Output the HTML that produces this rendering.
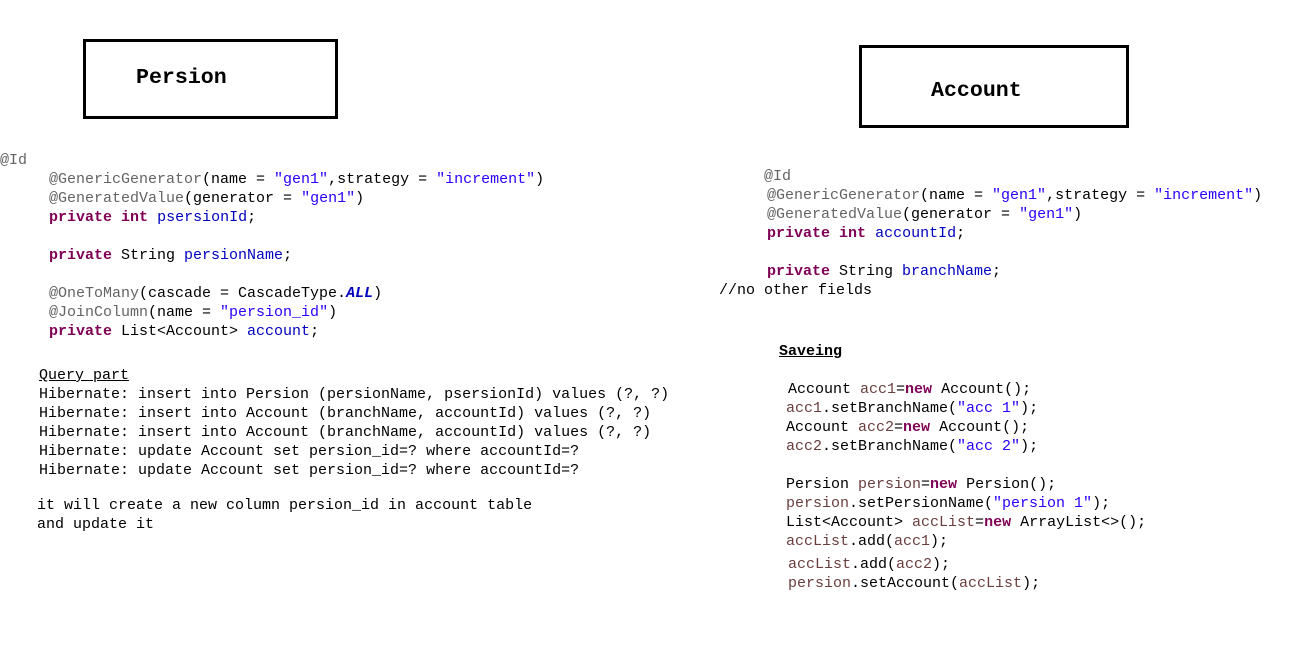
<!DOCTYPE html>
<html><head><meta charset="utf-8"><style>
body{margin:0;width:1297px;height:669px;background:#fff;position:relative;overflow:hidden;font-family:"Liberation Mono",monospace;font-size:15px;color:#000}
.l{position:absolute;white-space:pre;line-height:19px;height:19px}
.a{color:#646464}.s{color:#2a00ff}.k{color:#7f0055;font-weight:bold}.f{color:#0000c0}.v{color:#6a3e3e}
.box{position:absolute;border:3px solid #000;box-sizing:border-box}
.h{position:absolute;font-family:"Liberation Mono",monospace;font-weight:bold;font-size:21.6px;line-height:24px}
</style></head><body>
<div class="box" style="left:83px;top:39px;width:255px;height:80px"></div>
<div class="h" style="left:136px;top:66px">Persion</div>
<div class="box" style="left:859px;top:45px;width:270px;height:83px"></div>
<div class="h" style="left:931px;top:79px">Account</div>

<div class="l a" style="left:0;top:151px">@Id</div>
<div class="l" style="left:49px;top:170px"><span class="a">@GenericGenerator</span>(name = <span class="s">"gen1"</span>,strategy = <span class="s">"increment"</span>)</div>
<div class="l" style="left:49px;top:189px"><span class="a">@GeneratedValue</span>(generator = <span class="s">"gen1"</span>)</div>
<div class="l" style="left:49px;top:208px"><span class="k">private</span> <span class="k">int</span> <span class="f">psersionId</span>;</div>
<div class="l" style="left:49px;top:246px"><span class="k">private</span> String <span class="f">persionName</span>;</div>
<div class="l" style="left:49px;top:284px"><span class="a">@OneToMany</span>(cascade = CascadeType.<b style="color:#0000c0;font-style:italic">ALL</b>)</div>
<div class="l" style="left:49px;top:303px"><span class="a">@JoinColumn</span>(name = <span class="s">"persion_id"</span>)</div>
<div class="l" style="left:49px;top:322px"><span class="k">private</span> List&lt;Account&gt; <span class="f">account</span>;</div>

<div class="l" style="left:39px;top:366px;text-decoration:underline">Query part</div>
<div class="l" style="left:39px;top:385px">Hibernate: insert into Persion (persionName, psersionId) values (?, ?)</div>
<div class="l" style="left:39px;top:404px">Hibernate: insert into Account (branchName, accountId) values (?, ?)</div>
<div class="l" style="left:39px;top:423px">Hibernate: insert into Account (branchName, accountId) values (?, ?)</div>
<div class="l" style="left:39px;top:442px">Hibernate: update Account set persion_id=? where accountId=?</div>
<div class="l" style="left:39px;top:461px">Hibernate: update Account set persion_id=? where accountId=?</div>
<div class="l" style="left:37px;top:496px">it will create a new column persion_id in account table</div>
<div class="l" style="left:37px;top:515px">and update it</div>

<div class="l a" style="left:764px;top:167px">@Id</div>
<div class="l" style="left:767px;top:186px"><span class="a">@GenericGenerator</span>(name = <span class="s">"gen1"</span>,strategy = <span class="s">"increment"</span>)</div>
<div class="l" style="left:767px;top:205px"><span class="a">@GeneratedValue</span>(generator = <span class="s">"gen1"</span>)</div>
<div class="l" style="left:767px;top:224px"><span class="k">private</span> <span class="k">int</span> <span class="f">accountId</span>;</div>
<div class="l" style="left:767px;top:262px"><span class="k">private</span> String <span class="f">branchName</span>;</div>
<div class="l" style="left:719px;top:281px">//no other fields</div>

<div class="l" style="left:779px;top:342px;font-weight:bold;text-decoration:underline">Saveing</div>
<div class="l" style="left:788px;top:380px">Account <span class="v">acc1</span>=<span class="k">new</span> Account();</div>
<div class="l" style="left:786px;top:399px"><span class="v">acc1</span>.setBranchName(<span class="s">"acc 1"</span>);</div>
<div class="l" style="left:786px;top:418px">Account <span class="v">acc2</span>=<span class="k">new</span> Account();</div>
<div class="l" style="left:786px;top:437px"><span class="v">acc2</span>.setBranchName(<span class="s">"acc 2"</span>);</div>
<div class="l" style="left:786px;top:475px">Persion <span class="v">persion</span>=<span class="k">new</span> Persion();</div>
<div class="l" style="left:786px;top:494px"><span class="v">persion</span>.setPersionName(<span class="s">"persion 1"</span>);</div>
<div class="l" style="left:786px;top:513px">List&lt;Account&gt; <span class="v">accList</span>=<span class="k">new</span> ArrayList&lt;&gt;();</div>
<div class="l" style="left:786px;top:532px"><span class="v">accList</span>.add(<span class="v">acc1</span>);</div>
<div class="l" style="left:788px;top:555px"><span class="v">accList</span>.add(<span class="v">acc2</span>);</div>
<div class="l" style="left:788px;top:574px"><span class="v">persion</span>.setAccount(<span class="v">accList</span>);</div>
</body></html>
